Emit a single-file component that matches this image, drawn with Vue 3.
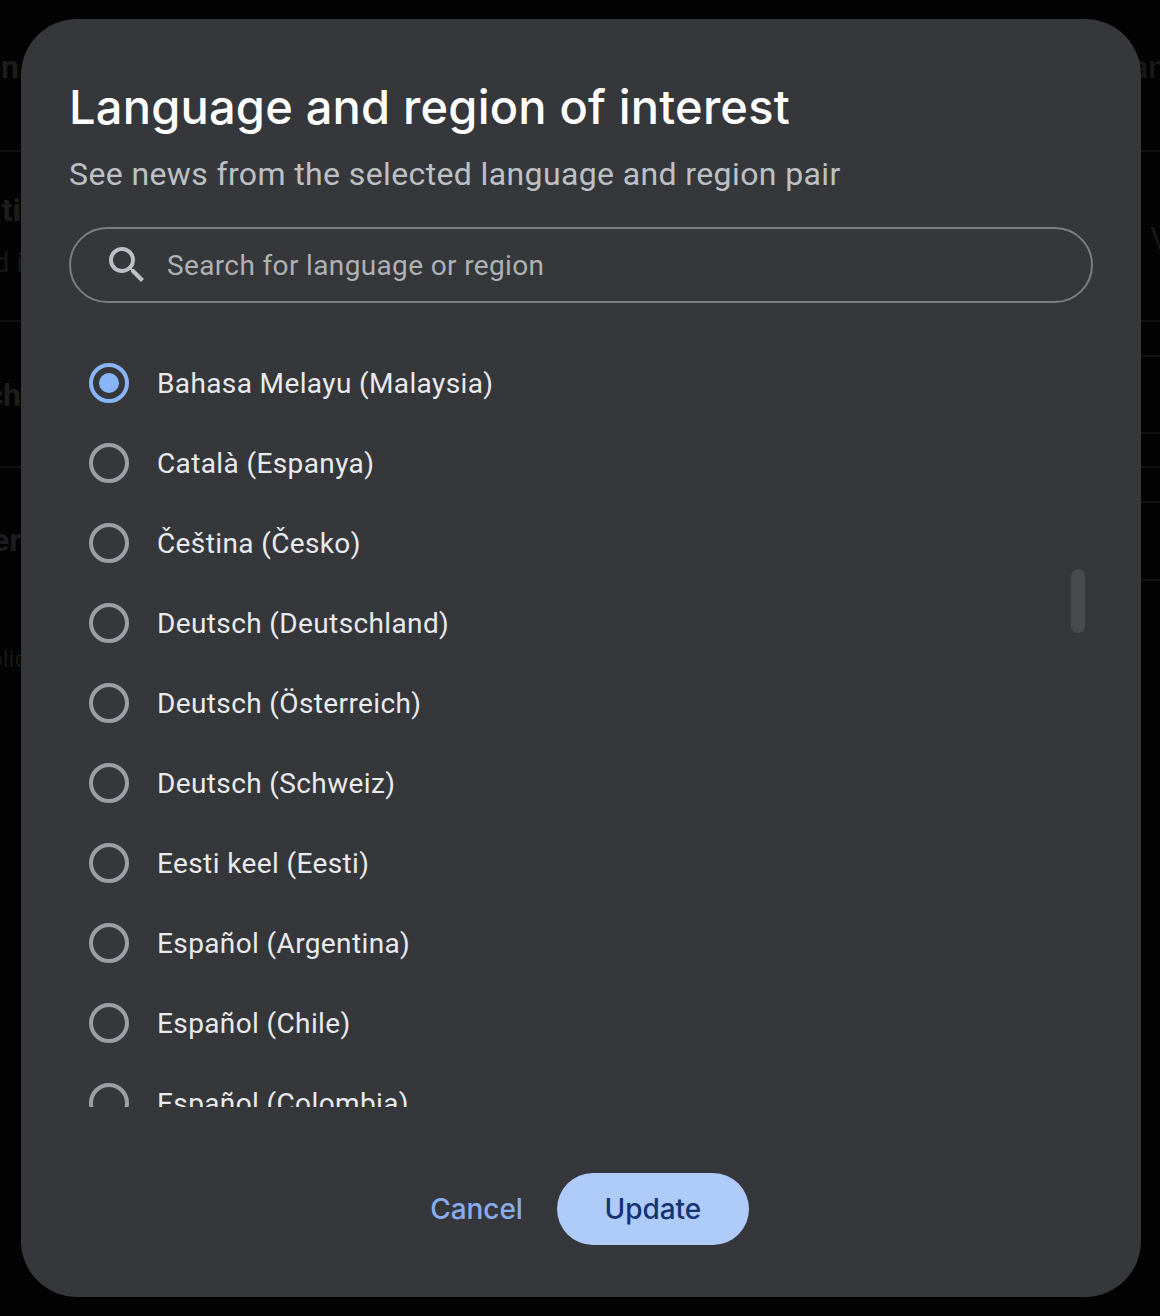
<script setup>
const options = [
  "Bahasa Melayu (Malaysia)",
  "Català (Espanya)",
  "Čeština (Česko)",
  "Deutsch (Deutschland)",
  "Deutsch (Österreich)",
  "Deutsch (Schweiz)",
  "Eesti keel (Eesti)",
  "Español (Argentina)",
  "Español (Chile)",
  "Español (Colombia)"
]

// settings rows behind the scrim, only their edges show
const leftRows = [
  { height: 152, lines: [{ text: "en", top: 48, right: 11 }] },
  { height: 170, lines: [{ text: "ti", top: 39, right: 9 }, { text: "d i", top: 92, right: 7, size: 28, light: true }] },
  { height: 146, lines: [{ text: "ch", top: 54, right: 9 }] },
  { height: 144, lines: [{ text: "er", top: 53, right: 9 }] },
  { height: 100, lines: [{ text: "olic", top: 28, right: 3, size: 24, light: true }] }
]
</script>

<template>
  <div class="page">
    <div class="behind">
      <div
        v-for="(row, i) in leftRows"
        :key="i"
        class="behind-row"
        :style="{ height: row.height + 'px' }"
      >
        <span
          v-for="line in row.lines"
          :key="line.text"
          class="behind-text"
          :class="{ light: line.light }"
          :style="{ top: line.top + 'px', right: line.right + 'px', fontSize: (line.size || 32) + 'px' }"
        >{{ line.text }}</span>
      </div>
    </div>

    <div class="behind-right">
      <span class="right-an">an</span>
      <span class="right-v">V</span>
      <i class="rule" style="top: 150px"></i>
      <i class="rule" style="top: 320px"></i>
      <i class="rule" style="top: 355px"></i>
      <i class="rule" style="top: 432px"></i>
      <i class="rule" style="top: 466px"></i>
      <i class="rule" style="top: 501px"></i>
      <i class="rule" style="top: 579px"></i>
    </div>

    <div class="overlay">
      <div class="dialog">
        <h2 class="title">Language and region of interest</h2>
        <p class="subtitle">See news from the selected language and region pair</p>

        <div class="search">
          <svg class="search-icon" viewBox="0 0 24 24" width="48" height="48">
            <path
              fill="currentColor"
              d="M15.5 14h-.79l-.28-.27A6.47 6.47 0 0 0 16 9.5 6.5 6.5 0 1 0 9.5 16c1.61 0 3.09-.59 4.23-1.57l.27.28v.79l5 4.99L20.49 19l-4.99-5zm-6 0C7.01 14 5 11.99 5 9.5S7.01 5 9.5 5 14 7.01 14 9.5 11.99 14 9.5 14z"
            />
          </svg>
          <span class="search-text">Search for language or region</span>
        </div>

        <div class="list-wrap">
          <div class="list">
            <div
              v-for="(name, i) in options"
              :key="name"
              class="option"
            >
              <span class="radio" :class="{ checked: i === 0 }"></span>
              <span class="option-name">{{ name }}</span>
            </div>
          </div>
          <div class="thumb"></div>
        </div>

        <div class="actions">
          <button class="btn-cancel">Cancel</button>
          <button class="btn-update">Update</button>
        </div>
      </div>
    </div>
  </div>
</template>

<style>
html,
body {
  margin: 0;
  background: #000;
}
</style>

<style scoped>
.page {
  position: relative;
  width: 1160px;
  height: 1316px;
  overflow: hidden;
  background: #030303;
  font-family: Roboto, "Liberation Sans", sans-serif;
}

.behind {
  display: flex;
  flex-direction: column;
  width: 30px;
}

.behind-row {
  position: relative;
  box-sizing: border-box;
  border-bottom: 2px solid #111112;
}

.behind-row:nth-child(n + 4) {
  border-bottom: 0;
}

.behind-text {
  position: absolute;
  line-height: 38px;
  font-weight: 700;
  color: #1d1d1f;
  white-space: nowrap;
}

.behind-text.light {
  font-weight: 400;
  color: #171718;
}

.behind-right {
  position: absolute;
  top: 0;
  right: 0;
  bottom: 0;
  width: 30px;
}

.right-an,
.right-v {
  position: absolute;
  font-size: 32px;
  line-height: 38px;
  white-space: nowrap;
  color: #18181a;
}

.right-an {
  top: 48px;
  left: 1px;
  font-weight: 500;
}

.right-v {
  top: 219px;
  left: 20px;
}

.rule {
  position: absolute;
  left: 0;
  right: 0;
  height: 2px;
  background: #111112;
}

.overlay {
  position: absolute;
  top: 19px;
  left: 21px;
  width: 1120px;
  height: 1278px;
}

.dialog {
  box-sizing: border-box;
  height: 100%;
  padding: 56px 48px 52px;
  display: flex;
  flex-direction: column;
  background: #36373b;
  border-radius: 56px;
}

.title {
  margin: 0;
  font-family: Inter, Roboto, sans-serif;
  font-size: 47px;
  line-height: 64px;
  font-weight: 500;
  letter-spacing: 0.2px;
  color: #fff;
  white-space: nowrap;
}

.subtitle {
  margin: 15px 0 0;
  font-size: 32px;
  line-height: 40px;
  letter-spacing: 0.38px;
  color: #bdc1c6;
  white-space: nowrap;
}

.search {
  box-sizing: border-box;
  height: 76px;
  margin-top: 33px;
  padding-left: 32px;
  display: flex;
  align-items: center;
  gap: 16px;
  border: 2px solid #7c7d80;
  border-radius: 38px;
}

.search-icon {
  color: #bdc1c6;
}

.search-text {
  padding-top: 1px;
  font-size: 28px;
  letter-spacing: 0.36px;
  color: #aeb1b6;
}

.list-wrap {
  position: relative;
  margin-top: 40px;
  height: 764px;
  overflow: hidden;
}

.list {
  display: flex;
  flex-direction: column;
}

.option {
  flex: none;
  height: 80px;
  padding-left: 20px;
  display: flex;
  align-items: center;
  gap: 28px;
}

.radio {
  box-sizing: border-box;
  position: relative;
  width: 40px;
  height: 40px;
  border: 4px solid #9aa0a6;
  border-radius: 50%;
}

.radio.checked {
  border-color: #8ab4f8;
}

.radio.checked::after {
  content: "";
  position: absolute;
  inset: 6px;
  border-radius: 50%;
  background: #8ab4f8;
}

.option-name {
  padding-top: 1px;
  font-size: 28px;
  letter-spacing: 0.38px;
  color: #e8eaed;
}

.thumb {
  position: absolute;
  top: 226px;
  right: 8px;
  width: 14px;
  height: 64px;
  border-radius: 7px;
  background: #494a4e;
}

.actions {
  margin-top: 66px;
  padding-left: 17px;
  display: flex;
  justify-content: center;
  align-items: center;
  gap: 34px;
}

.btn-cancel,
.btn-update {
  border: 0;
  padding: 0;
  font-family: Inter, Roboto, sans-serif;
  font-size: 28px;
  font-weight: 500;
  letter-spacing: -0.05px;
  cursor: pointer;
}

.btn-cancel {
  background: none;
  color: #88aeee;
}

.btn-update {
  width: 192px;
  height: 72px;
  border-radius: 36px;
  background: #aecbfa;
  color: #17336f;
}
</style>
